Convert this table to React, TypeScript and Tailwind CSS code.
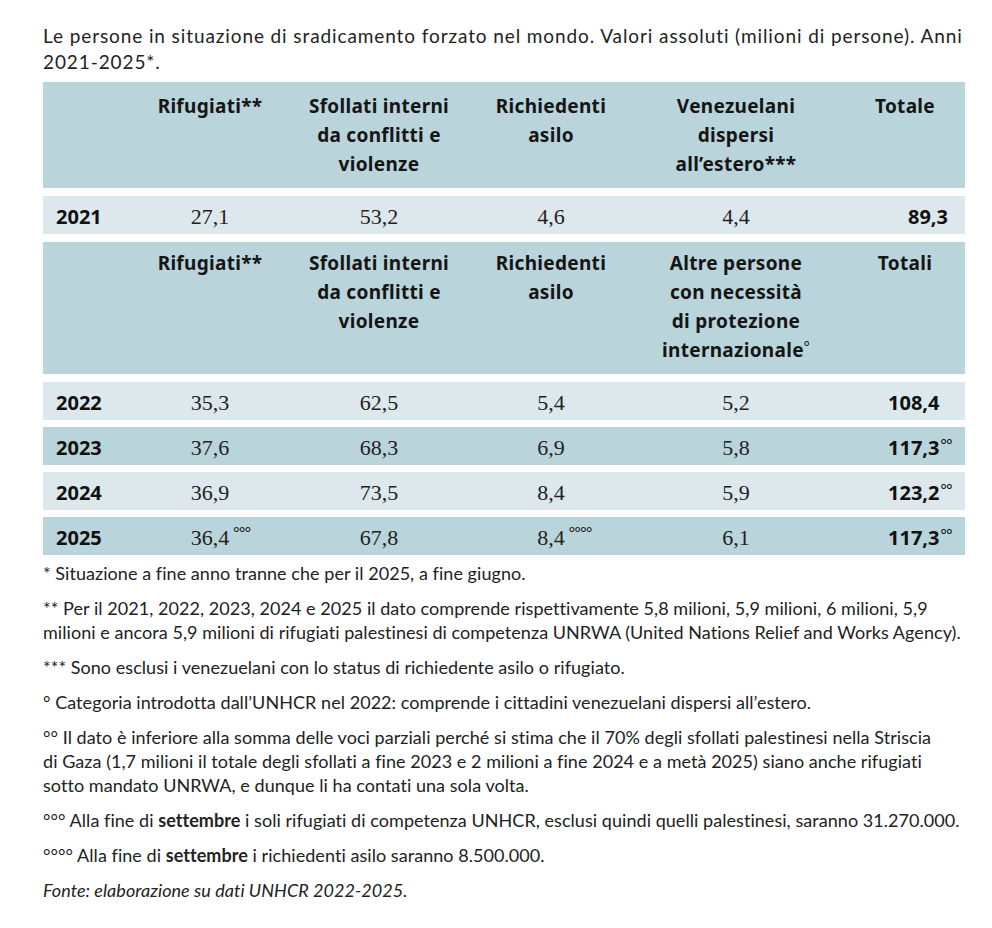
import React from "react";

const SANS = "font-['Lato','Noto_Sans',sans-serif]";
const BOLD = "font-['Noto_Sans',sans-serif] font-bold";
const SERIF = "font-['Liberation_Serif','Times_New_Roman',serif]";
const GRID = "grid grid-cols-[102px_130px_208px_136px_234px_112px]";

function Num({ v, sup }: { v: string; sup?: string }) {
  return (
    <div className={`flex justify-center ${SERIF} text-[22px] leading-none text-[#222]`}>
      <span className="relative">
        {v}
        {sup ? (
          <span className={`absolute left-full top-[-2px] pl-[4px] ${SANS} text-[15px] leading-none tracking-[-0.5px] whitespace-nowrap`}>{sup}</span>
        ) : null}
      </span>
    </div>
  );
}

function Header({ cols, total, pt, h }: { cols: React.ReactNode[]; total: string; pt: string; h: string }) {
  return (
    <div className={`${GRID} bg-[#b9d4db] ${h} ${pt} ${BOLD} text-[19px] leading-[29px] tracking-[0.3px] text-[#151515] text-center`}>
      <div />
      {cols.map((c, i) => (
        <div key={i}>{c}</div>
      ))}
      <div className="pr-[8px]">{total}</div>
    </div>
  );
}

type Row = { y: string; v: string[]; sups?: string[]; t: string; tSup?: string; dark: boolean };

const rows2: Row[] = [
  { y: "2022", v: ["35,3", "62,5", "5,4", "5,2"], t: "108,4", dark: false },
  { y: "2023", v: ["37,6", "68,3", "6,9", "5,8"], t: "117,3", tSup: "°°", dark: true },
  { y: "2024", v: ["36,9", "73,5", "8,4", "5,9"], t: "123,2", tSup: "°°", dark: false },
  { y: "2025", v: ["36,4", "67,8", "8,4", "6,1"], sups: ["°°°", "", "°°°°", ""], t: "117,3", tSup: "°°", dark: true },
];

function DataRow({ r, first }: { r: Row; first?: boolean }) {
  return (
    <div className={`${GRID} items-center h-[38px] pt-[4px] ${r.dark ? "bg-[#b9d4db]" : "bg-[#dce8eb]"}`}>
      <div className={`${BOLD} text-[20px] leading-none text-[#111] pl-[13px]`}>{r.y}</div>
      {r.v.map((v, i) => (
        <Num key={i} v={v} sup={r.sups ? r.sups[i] : undefined} />
      ))}
      {first ? (
        <div className={`${BOLD} text-[20px] leading-none text-[#111] text-right pr-[17px]`}>{r.t}</div>
      ) : (
        <div className={`${BOLD} text-[20px] leading-none text-[#111] pl-[35px] whitespace-nowrap`}>
          {r.t}
          {r.tSup ? (
            <span className={`relative top-[-5px] ${SANS} font-normal text-[15px] leading-none tracking-[-0.5px] pl-[1px]`}>{r.tSup}</span>
          ) : null}
        </div>
      )}
    </div>
  );
}

export default function App() {
  return (
    <div className={`w-[992px] min-h-[928px] bg-white ${SANS} text-[#222]`}>
      <div className="pl-[43px] pt-[23px] w-[980px]">
        <p className="text-[19px] leading-[26px] tracking-[0.9px] whitespace-nowrap">
          Le persone in situazione di sradicamento forzato nel mondo. Valori assoluti (milioni di persone). Anni
          <br />
          2021-2025*.
        </p>
        <div className="mt-[7px] flex flex-col w-[922px]">
          <Header
            h="h-[106px]"
            pt="pt-[10px]"
            cols={[
              <>Rifugiati**</>,
              <>
                Sfollati interni
                <br />
                da conflitti e
                <br />
                violenze
              </>,
              <>
                Richiedenti
                <br />
                asilo
              </>,
              <>
                Venezuelani
                <br />
                dispersi
                <br />
                all’estero***
              </>,
            ]}
            total="Totale"
          />
          <div className="h-[8px]" />
          <DataRow first r={{ y: "2021", v: ["27,1", "53,2", "4,6", "4,4"], t: "89,3", dark: false }} />
          <div className="h-[8px]" />
          <Header
            h="h-[132px]"
            pt="pt-[7px]"
            cols={[
              <>Rifugiati**</>,
              <>
                Sfollati interni
                <br />
                da conflitti e
                <br />
                violenze
              </>,
              <>
                Richiedenti
                <br />
                asilo
              </>,
              <>
                Altre persone
                <br />
                con necessità
                <br />
                di protezione
                <br />
                internazionale
                <span className={`relative top-[-6px] ${SANS} font-normal text-[14px] leading-none`}>°</span>
              </>,
            ]}
            total="Totali"
          />
          <div className="h-[8px]" />
          <div className="flex flex-col gap-[7px]">
            {rows2.map((r) => (
              <DataRow key={r.y} r={r} />
            ))}
          </div>
        </div>
        <div className="mt-[6px] flex flex-col gap-[11px] text-[18px] leading-[24px] tracking-[0.05px] whitespace-nowrap">
          <p>* Situazione a fine anno tranne che per il 2025, a fine giugno.</p>
          <p>
            ** Per il 2021, 2022, 2023, 2024 e 2025 il dato comprende rispettivamente 5,8 milioni, 5,9 milioni, 6 milioni, 5,9
            <br />
            milioni e ancora 5,9 milioni di rifugiati palestinesi di competenza UNRWA (United Nations Relief and Works Agency).
          </p>
          <p>*** Sono esclusi i venezuelani con lo status di richiedente asilo o rifugiato.</p>
          <p>° Categoria introdotta dall’UNHCR nel 2022: comprende i cittadini venezuelani dispersi all’estero.</p>
          <p>
            °° Il dato è inferiore alla somma delle voci parziali perché si stima che il 70% degli sfollati palestinesi nella Striscia
            <br />
            di Gaza (1,7 milioni il totale degli sfollati a fine 2023 e 2 milioni a fine 2024 e a metà 2025) siano anche rifugiati
            <br />
            sotto mandato UNRWA, e dunque li ha contati una sola volta.
          </p>
          <p>
            °°° Alla fine di <b className="font-bold">settembre</b> i soli rifugiati di competenza UNHCR, esclusi quindi quelli palestinesi, saranno 31.270.000.
          </p>
          <p>
            °°°° Alla fine di <b className="font-bold">settembre</b> i richiedenti asilo saranno 8.500.000.
          </p>
          <p className="italic">Fonte: elaborazione su dati UNHCR 2022-2025.</p>
        </div>
      </div>
    </div>
  );
}
